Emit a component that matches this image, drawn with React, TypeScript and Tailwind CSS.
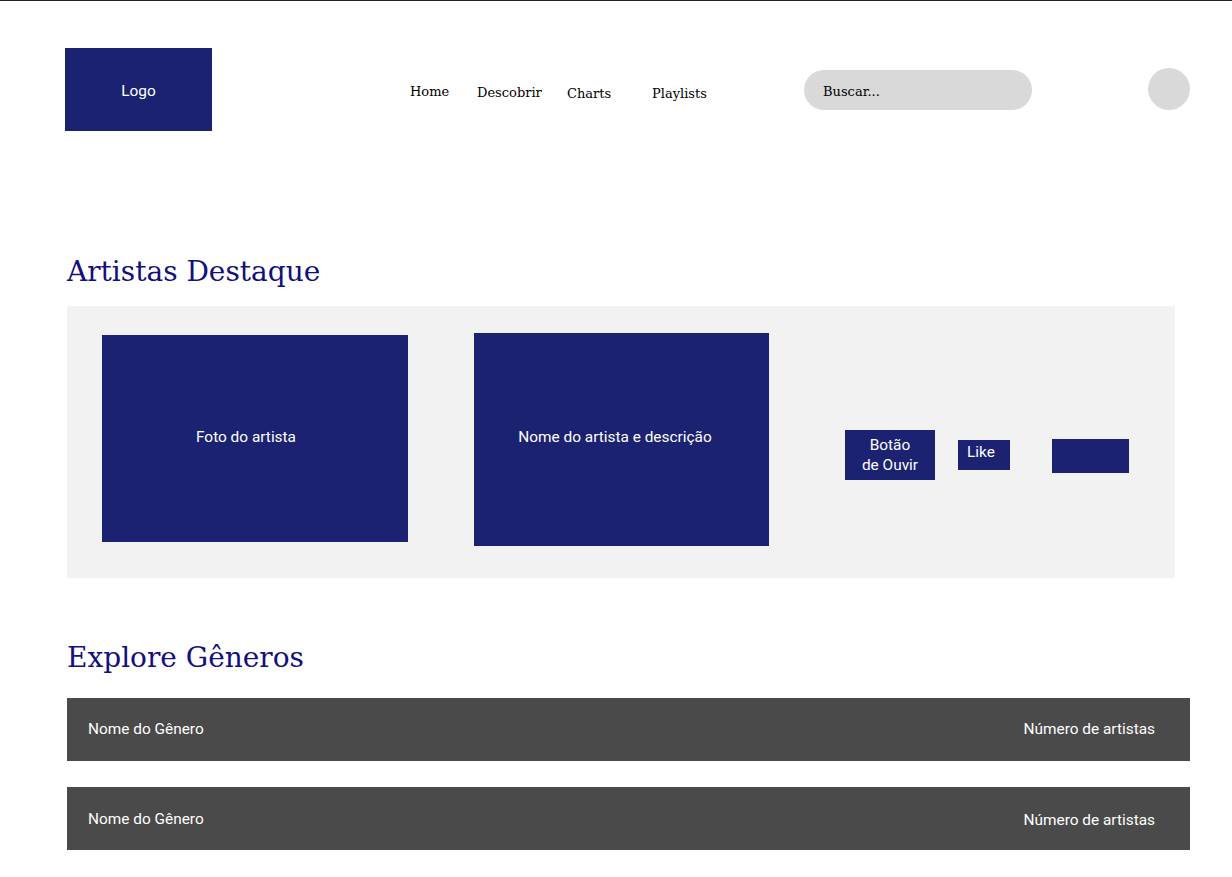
import React from "react";

const slab = { fontFamily: '"DejaVu Serif", "Liberation Serif", serif' };
const sans = { fontFamily: 'Roboto, "Noto Sans", sans-serif' };

export default function App() {
  return (
    <div className="w-[1232px] h-[877px] bg-white border-t border-[#222222] overflow-hidden" style={sans}>
      <header className="flex items-center pl-[65px] mt-[47px] h-[83px]">
        <div className="w-[147px] h-[83px] bg-[#1b2272] flex items-center justify-center text-white text-[15.4px] pt-[5px]">
          Logo
        </div>
        <nav className="flex items-center ml-[198px] text-[13px] text-black" style={slab}>
          <div className="w-[67px] mt-[5px]">Home</div>
          <div className="w-[90px] mt-[7px]">Descobrir</div>
          <div className="w-[85px] mt-[9px]">Charts</div>
          <div className="w-[152px] mt-[9px]">Playlists</div>
        </nav>
        <div className="w-[228px] h-[40px] rounded-full bg-[#d9d9d9] flex items-center pl-[19px] text-[13px] text-black mt-[1px] pt-[3px]" style={slab}>
          Buscar...
        </div>
        <div className="ml-[116px] w-[42px] h-[42px] rounded-full bg-[#d9d9d9] -mt-[2px]" />
      </header>

      <h2 className="ml-[67px] mt-[123px] text-[28px] leading-[36px] text-[#130f7c]" style={slab}>
        Artistas Destaque
      </h2>

      <section className="ml-[67px] mt-[16px] w-[1108px] h-[272px] bg-[#f2f2f2] flex items-start pl-[35px] text-white text-[15.4px]">
        <div className="mt-[29px] w-[306px] h-[207px] bg-[#1b2272] flex items-center justify-center pr-[18px] pb-[2px]">
          Foto do artista
        </div>
        <div className="ml-[66px] mt-[27px] w-[295px] h-[213px] bg-[#1b2272] flex items-center justify-center pr-[13px] pb-[4px]">
          Nome do artista e descrição
        </div>
        <div className="ml-[76px] mt-[124px] w-[90px] h-[50px] bg-[#1b2272] flex items-center justify-center text-center leading-[20px]">
          Botão
          <br />
          de Ouvir
        </div>
        <div className="ml-[23px] mt-[134px] w-[52px] h-[30px] bg-[#1b2272] pl-[9px] pt-[2px] leading-[20px]">
          Like
        </div>
        <div className="ml-[42px] mt-[133px] w-[77px] h-[34px] bg-[#1b2272]" />
      </section>

      <h2 className="ml-[67px] mt-[62px] text-[28px] leading-[36px] text-[#130f7c]" style={slab}>
        Explore Gêneros
      </h2>

      <div className="ml-[67px] mt-[22px] w-[1123px] flex flex-col gap-[26px] text-white text-[15.4px]">
        <div className="h-[63px] bg-[#4a4a4a] flex items-center justify-between pl-[21px] pr-[35px] pt-[1px]">
          <span>Nome do Gênero</span>
          <span>Número de artistas</span>
        </div>
        <div className="h-[63px] bg-[#4a4a4a] flex items-center justify-between pl-[21px] pr-[35px] pt-[3px]">
          <span>Nome do Gênero</span>
          <span className="mt-[1px]">Número de artistas</span>
        </div>
      </div>
    </div>
  );
}
